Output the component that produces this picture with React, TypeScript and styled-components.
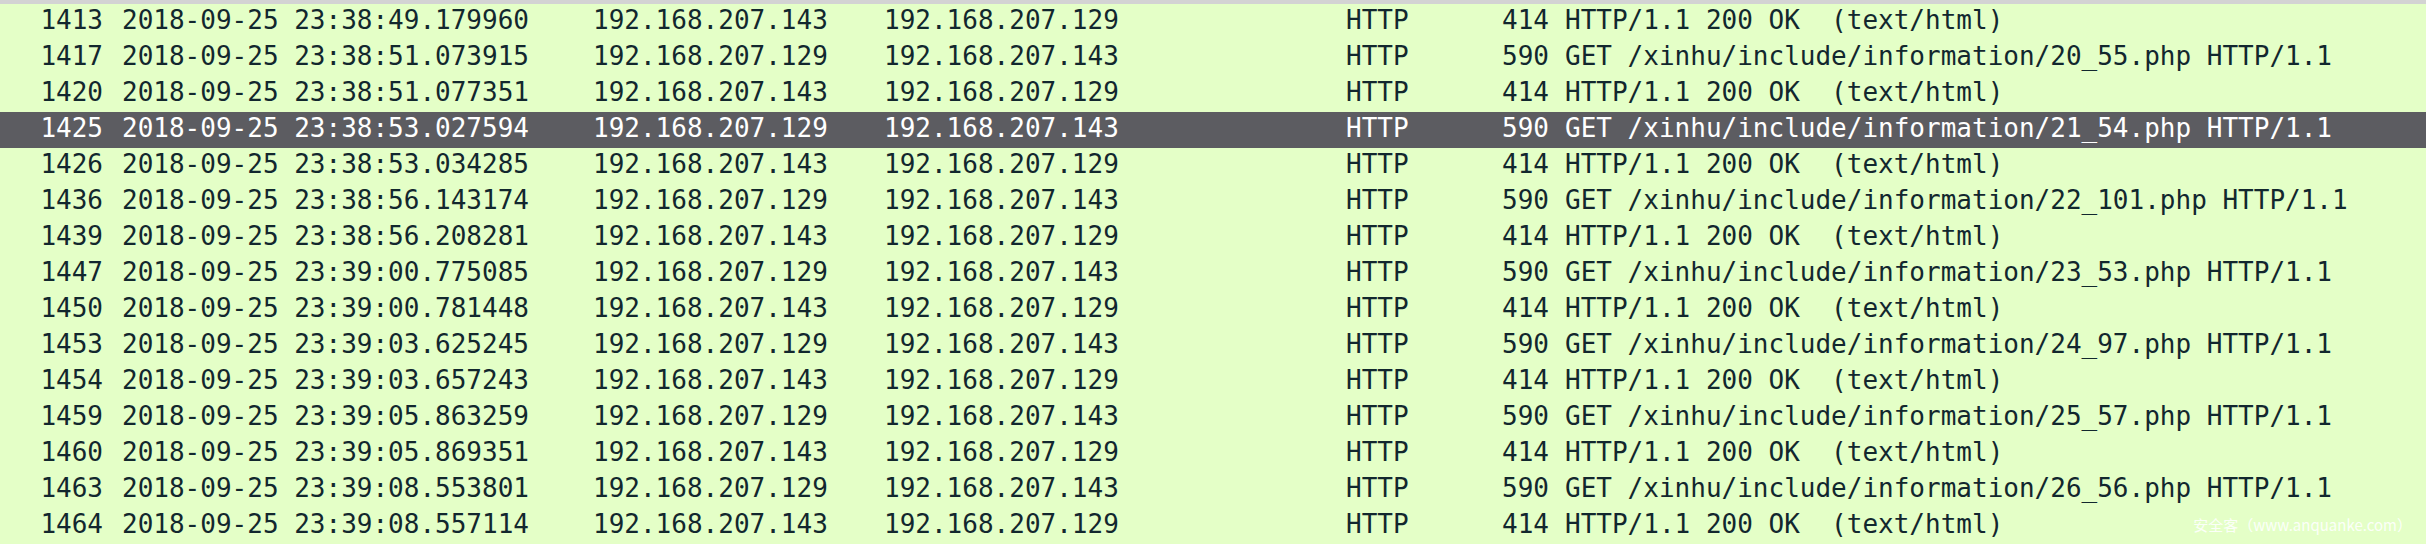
import React from "react";
import styled, { createGlobalStyle } from "styled-components";

type Packet = {
  no: number;
  time: string;
  src: string;
  dst: string;
  len: number;
  info: string;
};

const RESPONSE = "HTTP/1.1 200 OK  (text/html)";
const get = (page: string) => `GET /xinhu/include/information/${page}.php HTTP/1.1`;
const SERVER = "192.168.207.143";
const CLIENT = "192.168.207.129";

const packets: Packet[] = [
  { no: 1413, time: "23:38:49.179960", src: SERVER, dst: CLIENT, len: 414, info: RESPONSE },
  { no: 1417, time: "23:38:51.073915", src: CLIENT, dst: SERVER, len: 590, info: get("20_55") },
  { no: 1420, time: "23:38:51.077351", src: SERVER, dst: CLIENT, len: 414, info: RESPONSE },
  { no: 1425, time: "23:38:53.027594", src: CLIENT, dst: SERVER, len: 590, info: get("21_54") },
  { no: 1426, time: "23:38:53.034285", src: SERVER, dst: CLIENT, len: 414, info: RESPONSE },
  { no: 1436, time: "23:38:56.143174", src: CLIENT, dst: SERVER, len: 590, info: get("22_101") },
  { no: 1439, time: "23:38:56.208281", src: SERVER, dst: CLIENT, len: 414, info: RESPONSE },
  { no: 1447, time: "23:39:00.775085", src: CLIENT, dst: SERVER, len: 590, info: get("23_53") },
  { no: 1450, time: "23:39:00.781448", src: SERVER, dst: CLIENT, len: 414, info: RESPONSE },
  { no: 1453, time: "23:39:03.625245", src: CLIENT, dst: SERVER, len: 590, info: get("24_97") },
  { no: 1454, time: "23:39:03.657243", src: SERVER, dst: CLIENT, len: 414, info: RESPONSE },
  { no: 1459, time: "23:39:05.863259", src: CLIENT, dst: SERVER, len: 590, info: get("25_57") },
  { no: 1460, time: "23:39:05.869351", src: SERVER, dst: CLIENT, len: 414, info: RESPONSE },
  { no: 1463, time: "23:39:08.553801", src: CLIENT, dst: SERVER, len: 590, info: get("26_56") },
  { no: 1464, time: "23:39:08.557114", src: SERVER, dst: CLIENT, len: 414, info: RESPONSE },
];

const SELECTED = 1425;

const GlobalStyle = createGlobalStyle`
  html, body {
    margin: 0;
    padding: 0;
    background: #e4ffc7;
    overflow: hidden;
  }
`;

const Page = styled.div`
  position: relative;
  width: 2426px;
  height: 544px;
  overflow: hidden;
  background: #e4ffc7;
  border-top: 4px solid #d3d3d3;
  box-sizing: border-box;
`;

const PacketList = styled.div`
  display: flex;
  flex-direction: column;
`;

// No. | Time | Source | Destination | Protocol | Length | Info
const Row = styled.div<{ $selected: boolean }>`
  display: grid;
  grid-template-columns: 103px 490px 291px 462px 100px 103px 1fr;
  height: 36px;
  background: ${(p) => (p.$selected ? "#5c5c61" : "#e4ffc7")};
  color: ${(p) => (p.$selected ? "#ffffff" : "#12272e")};
  font-family: "DejaVu Sans Mono", "Liberation Mono", monospace;
  font-size: 26px;
  line-height: 32px;
`;

const Cell = styled.div<{ $align?: "left" | "right"; $indent?: number }>`
  white-space: pre;
  text-align: ${(p) => p.$align ?? "left"};
  padding-left: ${(p) => p.$indent ?? 0}px;
`;

const Watermark = styled.div`
  position: absolute;
  right: 14px;
  bottom: 9px;
  font-family: "Noto Sans CJK SC", "Noto Sans", sans-serif;
  font-size: 15px;
  color: rgba(255, 255, 255, 0.9);
  white-space: pre;
`;

export default function App() {
  return (
    <>
      <GlobalStyle />
      <Page>
        <PacketList>
          {packets.map((p) => (
            <Row key={p.no} $selected={p.no === SELECTED}>
              <Cell $align="right">{p.no}</Cell>
              <Cell $indent={19}>{`2018-09-25 ${p.time}`}</Cell>
              <Cell>{p.src}</Cell>
              <Cell>{p.dst}</Cell>
              <Cell>HTTP</Cell>
              <Cell $align="right">{p.len}</Cell>
              <Cell $indent={16}>{p.info}</Cell>
            </Row>
          ))}
        </PacketList>
        <Watermark>安全客（www.anquanke.com）</Watermark>
      </Page>
    </>
  );
}
